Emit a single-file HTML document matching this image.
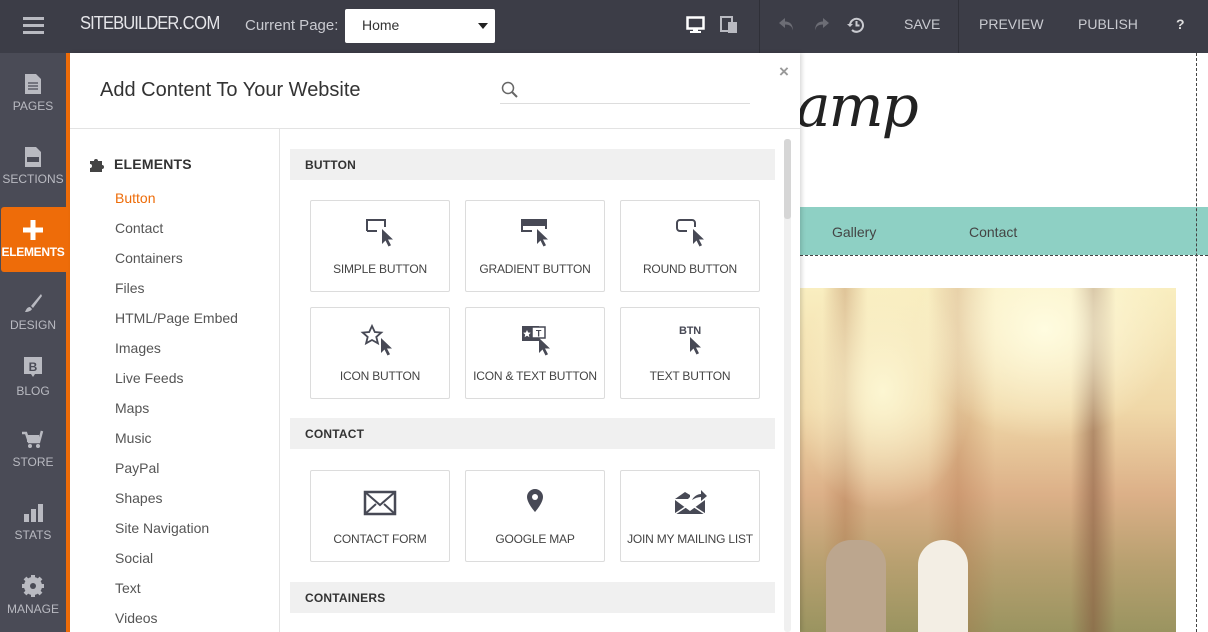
<!DOCTYPE html>
<html><head><meta charset="utf-8"><style>
*{margin:0;padding:0;box-sizing:border-box}
body{width:1208px;height:632px;overflow:hidden;position:relative;font-family:"Liberation Sans",sans-serif;background:#fff}
.abs{position:absolute}
.top{left:0;top:0;width:1208px;height:53px;background:#3c3d47}
.side{left:0;top:53px;width:66px;height:579px;background:#4a4b56}
.si{position:absolute;left:0;width:66px;text-align:center;color:#b9bac1;font-size:12px}
.si svg{display:block;margin:0 auto 5px}
.nav a{position:absolute;left:115px;font-size:14px;color:#555;text-decoration:none}
.hdr{position:absolute;left:290px;width:485px;height:31px;background:#f0f0f0;font-size:12px;font-weight:bold;color:#333;padding:9px 15px;letter-spacing:.2px}
.card{position:absolute;width:140px;height:92px;border:1px solid #dcdcdc;border-radius:2px;text-align:center;font-size:12px;color:#444;letter-spacing:-.2px}
.card svg{position:absolute;left:50%;top:16px;margin-left:-20px}
.card span{position:absolute;left:0;right:0;top:61px}
.tb{position:absolute;top:16px;color:#c9cad0;font-size:14px}
</style></head><body>
<div class="abs top"></div>
<div class="abs" style="left:23px;top:17px;width:21px;height:3px;background:#b9bac1;box-shadow:0 7px 0 #b9bac1,0 14px 0 #b9bac1"></div>
<div class="abs" style="left:80px;top:13px;color:#e6e6ea;font-size:18px;letter-spacing:-1px;transform:scaleX(.92);transform-origin:left">SITEBUILDER<span style="font-weight:300;letter-spacing:-.5px">.COM</span></div>
<div class="abs" style="left:245px;top:17px;color:#c9cad0;font-size:15px">Current Page:</div>
<div class="abs" style="left:345px;top:9px;width:150px;height:34px;background:#fff;border-radius:2px;font-size:14px;color:#333;padding:8px 17px">Home<div class="abs" style="right:7px;top:14px;border:5px solid transparent;border-top:6px solid #222;border-bottom:0"></div></div>
<svg class="abs" style="left:686px;top:16px" width="20" height="18"><rect x="1.5" y="1.5" width="16" height="11" fill="none" stroke="#fff" stroke-width="2.5"/><rect x="7" y="13" width="5" height="3" fill="#fff"/><rect x="4" y="15" width="11" height="2" fill="#fff"/></svg>
<svg class="abs" style="left:720px;top:16px" width="20" height="20"><rect x="1" y="1" width="11" height="14" fill="none" stroke="#b9bac1" stroke-width="2"/><rect x="8" y="6" width="9" height="11" fill="#b9bac1"/></svg>
<div class="abs" style="left:759px;top:0;width:1px;height:53px;background:#2f3038"></div>
<div class="abs" style="left:958px;top:0;width:1px;height:53px;background:#2f3038"></div>
<svg class="abs" style="left:778px;top:15px" width="18" height="18"><path d="M7 3L1 8l6 5V9.5c5 0 7 2 8 6c0-6-3-9-8-9z" fill="#6c6d75"/></svg>
<svg class="abs" style="left:812px;top:15px" width="18" height="18"><path d="M11 3l6 5-6 5V9.5c-5 0-7 2-8 6c0-6 3-9 8-9z" fill="#6c6d75"/></svg>
<svg class="abs" style="left:846px;top:15px" width="20" height="20"><path d="M4 10a6.5 6.5 0 1 1 2 5" fill="none" stroke="#c9cad0" stroke-width="2"/><path d="M1 9h6l-3 3z" fill="#c9cad0"/><path d="M10.5 6v4.5h3" fill="none" stroke="#c9cad0" stroke-width="2"/></svg>
<div class="tb" style="left:904px">SAVE</div>
<div class="tb" style="left:979px">PREVIEW</div>
<div class="tb" style="left:1078px">PUBLISH</div>
<div class="tb" style="left:1176px;font-weight:bold;color:#ddd">?</div>

<div class="abs side"></div>
<div class="abs" style="left:66px;top:53px;width:4px;height:579px;background:#ee6c09"></div>
<div class="abs" style="left:1px;top:207px;width:69px;height:65px;background:#ee6c09;border-radius:3px 0 0 3px"></div>
<div class="si" style="top:74px"><svg width="18" height="20"><path d="M1 0h11l5 5v15H1z" fill="#b9bac1"/><path d="M4 9h10M4 12h10M4 15h10" stroke="#4a4b56" stroke-width="1.3"/></svg>PAGES</div>
<div class="si" style="top:147px"><svg width="18" height="20"><path d="M1 0h11l5 5v15H1z" fill="#b9bac1"/><rect x="3" y="10" width="12" height="5" fill="#4a4b56"/></svg>SECTIONS</div>
<div class="si" style="top:220px;color:#fff;font-weight:bold;letter-spacing:-.3px"><svg width="20" height="20"><path d="M7.5 0h5v7.5H20v5h-7.5V20h-5v-7.5H0v-5h7.5z" fill="#fff"/></svg>ELEMENTS</div>
<div class="si" style="top:293px"><svg width="20" height="20"><path d="M18 1L8 13l2 2L19 3z" fill="#b9bac1"/><path d="M7 14c-3 0-4 3-5 5c3 0 6-1 7-3z" fill="#b9bac1"/></svg>DESIGN</div>
<div class="si" style="top:357px"><svg width="20" height="22"><path d="M1 0h18v17h-7l-2 3-2-3H1z" fill="#b9bac1"/><text x="10" y="14" font-size="12" font-weight="bold" fill="#4a4b56" text-anchor="middle" font-family="Liberation Sans">B</text></svg>BLOG</div>
<div class="si" style="top:430px"><svg width="22" height="20"><path d="M0 3h4l3 9h10l3-11" fill="none" stroke="#b9bac1" stroke-width="2.5"/><rect x="5" y="5" width="12" height="7" fill="#b9bac1"/><circle cx="8" cy="16" r="2" fill="#b9bac1"/><circle cx="16" cy="16" r="2" fill="#b9bac1"/></svg>STORE</div>
<div class="si" style="top:503px"><svg width="20" height="20"><rect x="1" y="11" width="5" height="8" fill="#b9bac1"/><rect x="8" y="6" width="5" height="13" fill="#b9bac1"/><rect x="15" y="1" width="5" height="18" fill="#b9bac1"/></svg>STATS</div>
<div class="si" style="top:575px"><svg width="22" height="22"><circle cx="11" cy="11" r="7" fill="none" stroke="#b9bac1" stroke-width="4"/><path d="M11 0v22M0 11h22M3 3l16 16M19 3L3 19" stroke="#b9bac1" stroke-width="4"/><circle cx="11" cy="11" r="3" fill="#4a4b56"/></svg>MANAGE</div>

<div class="abs" style="left:796px;top:72px;font-family:'DejaVu Serif',serif;font-style:italic;font-size:58px;color:#222;letter-spacing:-2px">amp</div>
<div class="abs" style="left:800px;top:207px;width:408px;height:48px;background:#8ed0c4"></div>
<div class="abs" style="left:832px;top:224px;font-size:14px;color:#444">Gallery</div>
<div class="abs" style="left:969px;top:224px;font-size:14px;color:#444">Contact</div>
<div class="abs" style="left:800px;top:255px;width:408px;border-top:1px dashed #444"></div>
<div class="abs" style="left:1196px;top:53px;height:579px;border-left:1px dashed #444"></div>
<div class="abs" style="left:800px;top:288px;width:376px;height:344px;background:
radial-gradient(ellipse 130px 110px at 65% 12%,#fffce0 0%,rgba(255,250,210,0) 100%),
radial-gradient(ellipse 90px 120px at 22% 30%,#fcf6d2 0%,rgba(250,240,190,0) 100%),
linear-gradient(90deg,rgba(0,0,0,0) 6%,rgba(170,110,70,.35) 12%,rgba(0,0,0,0) 18%,rgba(0,0,0,0) 34%,rgba(170,100,60,.3) 42%,rgba(0,0,0,0) 52%,rgba(0,0,0,0) 72%,rgba(130,85,60,.55) 78%,rgba(0,0,0,0) 84%),
linear-gradient(180deg,#f9eec0 0%,#f0d8a8 35%,#dcb088 60%,#b8a070 80%,#9a9460 100%)"></div>
<div class="abs" style="left:826px;top:540px;width:60px;height:92px;background:#bca68e;border-radius:25px 25px 0 0"></div>
<div class="abs" style="left:918px;top:540px;width:50px;height:92px;background:#f3eee4;border-radius:25px 25px 0 0"></div>

<div class="abs" style="left:70px;top:53px;width:730px;height:579px;background:#fff;box-shadow:2px 0 4px rgba(0,0,0,.15)"></div>
<div class="abs" style="left:100px;top:79px;font-size:20px;color:#333">Add Content To Your Website</div>
<div class="abs" style="left:779px;top:62px;font-size:17px;color:#999;font-weight:bold">×</div>
<svg class="abs" style="left:501px;top:81px" width="18" height="18"><circle cx="7" cy="7" r="5.5" fill="none" stroke="#666" stroke-width="1.5"/><path d="M11 11l5 5" stroke="#666" stroke-width="2"/></svg>
<div class="abs" style="left:500px;top:103px;width:250px;height:1px;background:#ddd"></div>
<div class="abs" style="left:70px;top:128px;width:730px;height:1px;background:#e3e3e3"></div>
<div class="abs" style="left:279px;top:129px;width:1px;height:503px;background:#e3e3e3"></div>
<svg class="abs" style="left:89px;top:156px" width="16" height="16"><path d="M1 5h4a2 2 0 1 1 4 0h4v4a2 2 0 1 1 0 4v3H1v-4a2 2 0 1 0 0-4z" fill="#444"/></svg>
<div class="abs" style="left:114px;top:156px;font-size:14px;color:#333;font-weight:bold;letter-spacing:.2px">ELEMENTS</div>
<div class="nav">
<a style="top:190px;color:#ee6c09">Button</a><a style="top:220px">Contact</a><a style="top:250px">Containers</a><a style="top:280px">Files</a><a style="top:310px">HTML/Page Embed</a><a style="top:340px">Images</a><a style="top:370px">Live Feeds</a><a style="top:400px">Maps</a><a style="top:430px">Music</a><a style="top:460px">PayPal</a><a style="top:490px">Shapes</a><a style="top:520px">Site Navigation</a><a style="top:550px">Social</a><a style="top:580px">Text</a><a style="top:610px">Videos</a>
</div>
<div class="abs" style="left:784px;top:139px;width:7px;height:493px;background:#f0f0f0;border-radius:3px"></div>
<div class="abs" style="left:784px;top:139px;width:7px;height:80px;background:#d6d6d6;border-radius:3px"></div>

<div class="hdr" style="top:149px">BUTTON</div>
<div class="hdr" style="top:418px">CONTACT</div>
<div class="hdr" style="top:582px">CONTAINERS</div>

<svg width="0" height="0" style="position:absolute"><defs><path id="cur" d="M0 0v15l3.5-3.5 3 6 2.5-1.2-3-5.8H11z" fill="#474955"/></defs></svg>

<div class="card" style="left:310px;top:200px"><svg width="40" height="32"><path d="M7 14V3h18v7" fill="none" stroke="#474955" stroke-width="2"/><path d="M7 14h10" stroke="#474955" stroke-width="2"/><use href="#cur" x="22" y="12"/></svg><span>SIMPLE BUTTON</span></div>
<div class="card" style="left:465px;top:200px"><svg width="40" height="32"><rect x="6" y="2" width="26" height="7" fill="#474955"/><path d="M7 9v5h10M31 9v3" fill="none" stroke="#474955" stroke-width="2"/><use href="#cur" x="22" y="12"/></svg><span>GRADIENT BUTTON</span></div>
<div class="card" style="left:620px;top:200px"><svg width="40" height="32"><path d="M17 14h-7a3 3 0 0 1-3-3V6a3 3 0 0 1 3-3h12a3 3 0 0 1 3 3v4" fill="none" stroke="#474955" stroke-width="2"/><use href="#cur" x="23" y="12"/></svg><span>ROUND BUTTON</span></div>
<div class="card" style="left:310px;top:307px"><svg width="40" height="34"><path d="M12 2l2.8 6 6.5.6-5 4.3 1.6 6.4L12 16l-5.9 3.3 1.6-6.4-5-4.3 6.5-.6z" fill="none" stroke="#474955" stroke-width="1.8"/><use href="#cur" x="21" y="14"/></svg><span>ICON BUTTON</span></div>
<div class="card" style="left:465px;top:307px"><svg width="40" height="34"><rect x="7" y="2" width="17" height="15" fill="#474955"/><rect x="17" y="3" width="13" height="11" fill="#fff" stroke="#474955" stroke-width="1.5"/><path d="M12 6l1.2 2.5 2.6.3-2 1.8.6 2.6L12 11.8l-2.4 1.4.6-2.6-2-1.8 2.6-.3z" fill="#fff"/><text x="23.5" y="12.5" font-size="9" font-weight="bold" fill="#474955" text-anchor="middle" font-family="Liberation Sans">T</text><use href="#cur" x="24" y="14"/></svg><span>ICON &amp; TEXT BUTTON</span></div>
<div class="card" style="left:620px;top:307px"><svg width="40" height="36"><text x="20" y="10" font-size="11" font-weight="bold" fill="#474955" text-anchor="middle" font-family="Liberation Sans">BTN</text><use href="#cur" x="20" y="13"/></svg><span>TEXT BUTTON</span></div>

<div class="card" style="left:310px;top:470px"><svg width="40" height="32"><rect x="5" y="5" width="30" height="22" fill="none" stroke="#474955" stroke-width="2.5"/><path d="M5 5l15 13L35 5M5 27l11-10M35 27L24 17" fill="none" stroke="#474955" stroke-width="2"/></svg><span>CONTACT FORM</span></div>
<div class="card" style="left:465px;top:470px"><svg width="40" height="32"><path d="M20 2a8 8 0 0 1 8 8c0 6-8 15-8 15s-8-9-8-15a8 8 0 0 1 8-8z" fill="#474955"/><circle cx="20" cy="10" r="3" fill="#fff"/></svg><span>GOOGLE MAP</span></div>
<div class="card" style="left:620px;top:470px"><svg width="40" height="32"><path d="M5 12l10-7 5 3v2l-2 2z" fill="#474955"/><path d="M5 13v14h30V13L20 24z" fill="#474955"/><path d="M5 27l12-8M35 27L23 19" stroke="#fff" stroke-width="1.5"/><path d="M22 13c2-4 6-6 9-6V3l6 6-6 5v-4c-3 0-6 1-9 3z" fill="#474955"/></svg><span>JOIN MY MAILING LIST</span></div>
</body></html>
